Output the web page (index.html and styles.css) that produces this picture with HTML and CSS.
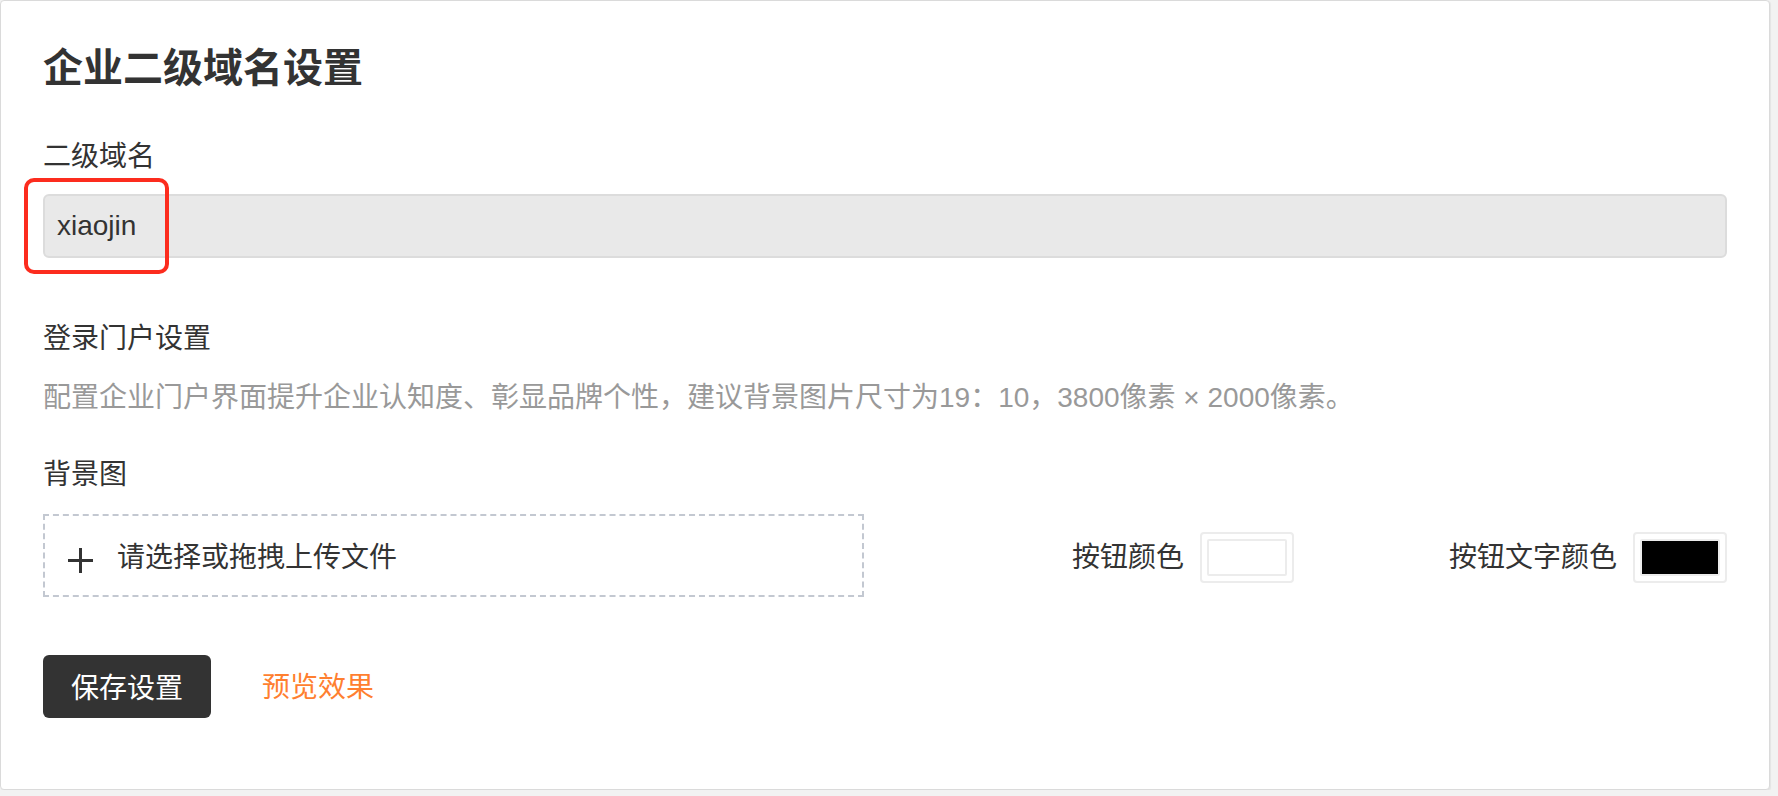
FILE: index.html
```html
<!DOCTYPE html>
<html lang="zh-CN">
<head>
<meta charset="utf-8">
<title>企业二级域名设置</title>
<link rel="stylesheet" href="styles.css">
</head>
<body>
<div class="card">
  <h1 class="title">企业二级域名设置</h1>

  <div class="field field-domain">
    <div class="label">二级域名</div>
    <div class="input-wrap">
      <div class="input">xiaojin</div>
      <div class="highlight"></div>
    </div>
  </div>

  <div class="field field-portal">
    <div class="label">登录门户设置</div>
    <div class="desc">配置企业门户界面提升企业认知度、彰显品牌个性，建议背景图片尺寸为19：10，3800像素 × 2000像素。</div>
  </div>

  <div class="field field-bg">
    <div class="label">背景图</div>
    <div class="upload-row">
      <div class="upload">
        <svg class="plus" width="25" height="25" viewBox="0 0 25 25"><path d="M12.5 0V25M0 12.5H25" stroke="#333" stroke-width="3" fill="none"/></svg>
        <span class="upload-text">请选择或拖拽上传文件</span>
      </div>
      <div class="color-item color-item-first">
        <span class="color-label">按钮颜色</span>
        <div class="swatch-trigger"><div class="swatch swatch-white"></div></div>
      </div>
      <div class="color-item">
        <span class="color-label">按钮文字颜色</span>
        <div class="swatch-trigger"><div class="swatch swatch-black"></div></div>
      </div>
    </div>
  </div>

  <div class="actions">
    <button class="btn-save">保存设置</button>
    <a class="link-preview">预览效果</a>
  </div>
</div>
</body>
</html>
```

FILE: styles.css
```css
html, body {
  margin: 0;
  padding: 0;
  background: #f2f2f2;
}

body {
  font-family: "Liberation Sans", "Noto Sans CJK SC", sans-serif;
  color: #333;
}

.card {
  box-sizing: border-box;
  width: 1770px;
  height: 790px;
  background: #fff;
  border: 1px solid #dadada;
  border-radius: 4px;
  box-shadow: 1px 1px 1px #e4e4e4;
  padding: 39px 42px 0 42px;
}

.title {
  margin: 0;
  font-size: 40px;
  line-height: 56px;
  font-weight: 700;
  color: #333;
}

.label {
  font-size: 28px;
  line-height: 40px;
  color: #333;
}

.field-domain {
  margin-top: 41px;
}

.input-wrap {
  position: relative;
  margin-top: 17px;
}

.input {
  box-sizing: border-box;
  height: 64px;
  background: #e9e9e9;
  border: 2px solid #dcdcdc;
  border-radius: 6px;
  padding: 0 12px;
  font-size: 28px;
  line-height: 60px;
  color: #333;
}

.highlight {
  position: absolute;
  left: -19px;
  top: -16px;
  width: 145px;
  height: 96px;
  box-sizing: border-box;
  border: 4px solid #fc2c1e;
  border-radius: 10px;
}

.field-portal {
  margin-top: 61px;
}

.desc {
  margin-top: 19px;
  font-size: 28px;
  line-height: 40px;
  color: #999;
}

.field-bg {
  margin-top: 37px;
}

.upload-row {
  margin-top: 19px;
  display: flex;
  align-items: center;
}

.upload {
  box-sizing: border-box;
  width: 821px;
  height: 83px;
  border: 2px dashed #c3c8d1;
  display: flex;
  align-items: center;
  padding-left: 23px;
}

.plus {
  margin-top: 10px;
  flex: none;
}

.upload-text {
  margin-left: 24px;
  margin-top: 4px;
  font-size: 28px;
  line-height: 40px;
  color: #333;
}

.color-item {
  display: flex;
  align-items: center;
  margin-left: 155px;
  margin-top: 4px;
}

.color-item-first {
  margin-left: auto;
}

.color-label {
  font-size: 28px;
  line-height: 40px;
  color: #333;
  margin-right: 16px;
}

.swatch-trigger {
  box-sizing: border-box;
  width: 94px;
  height: 51px;
  border: 2px solid #ececec;
  border-radius: 4px;
  padding: 5px;
  display: flex;
}

.swatch {
  flex: 1;
  border: 2px solid #ececec;
  border-radius: 2px;
}

.swatch-white {
  background: #fff;
}

.swatch-black {
  background: #000;
}

.actions {
  margin-top: 58px;
  display: flex;
  align-items: center;
}

.btn-save {
  box-sizing: border-box;
  height: 63px;
  width: 168px;
  padding: 4px 0 0;
  border: none;
  border-radius: 6px;
  background: #333;
  color: #fff;
  font-family: "Liberation Sans", "Noto Sans CJK SC", sans-serif;
  font-size: 28px;
  line-height: 59px;
}

.link-preview {
  margin-left: 51px;
  margin-top: 2px;
  font-size: 28px;
  line-height: 40px;
  color: #ff7f30;
  cursor: pointer;
}
```
